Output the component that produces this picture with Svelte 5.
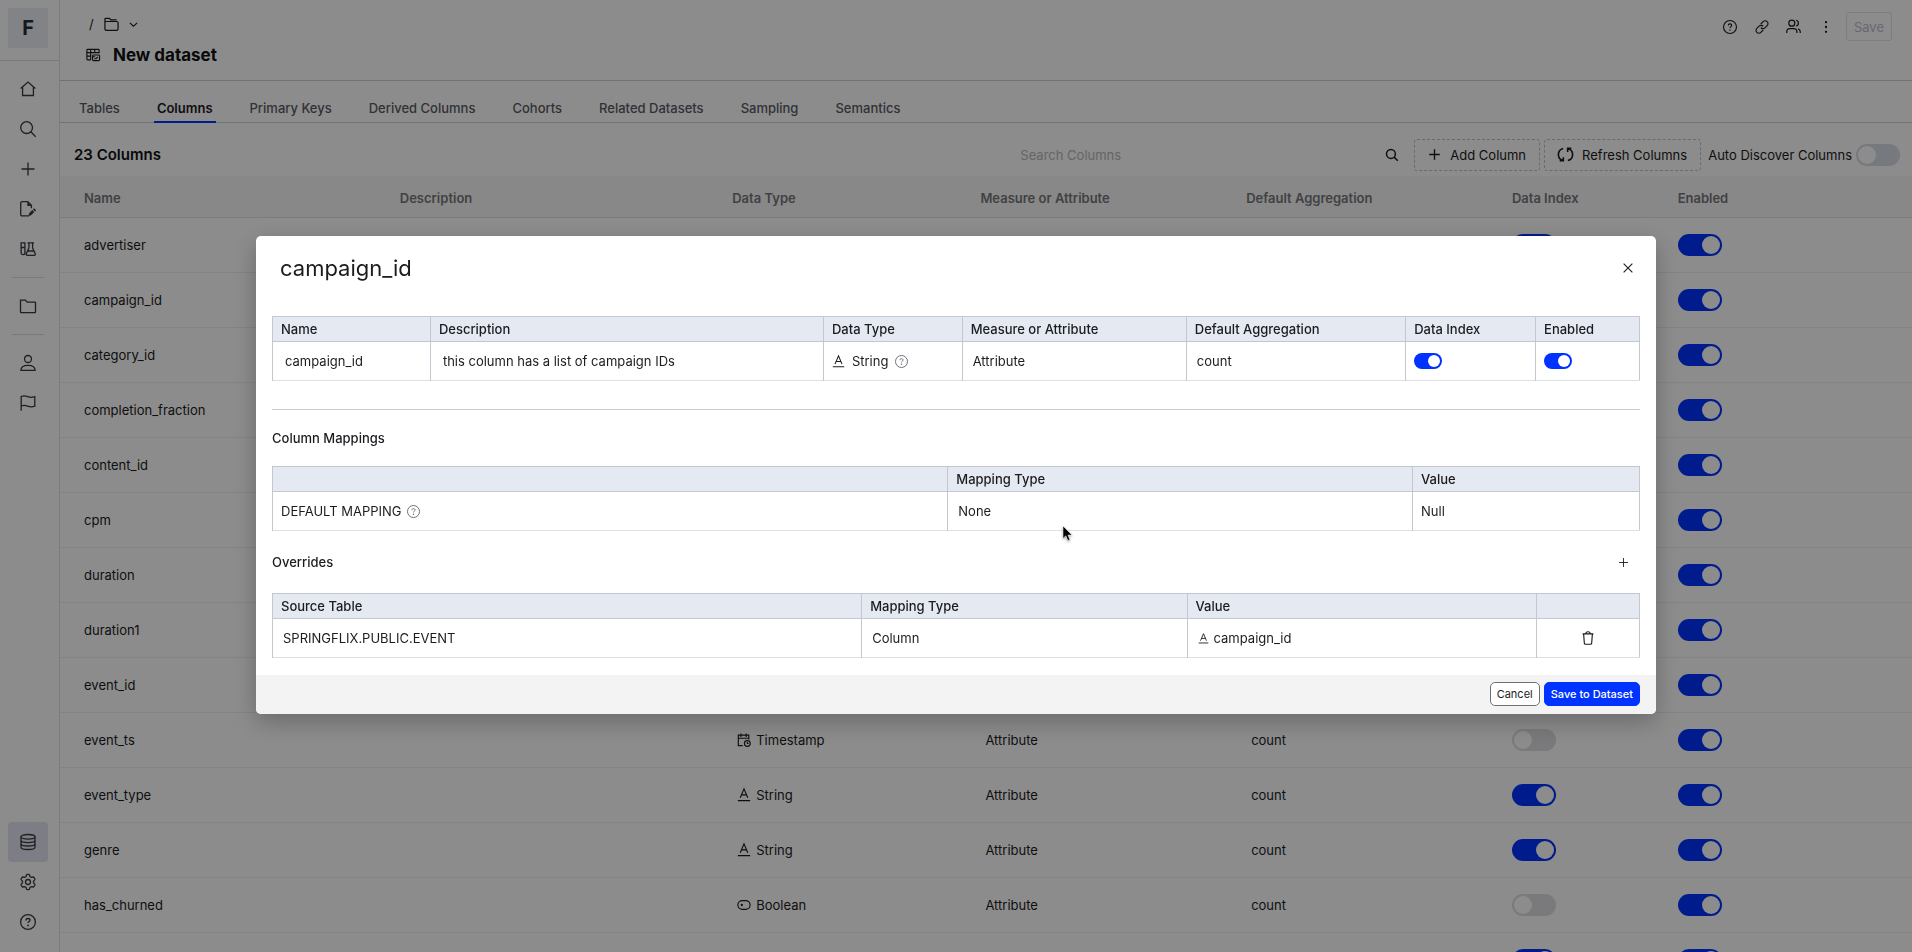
<script>
  const tabs = ['Tables', 'Columns', 'Primary Keys', 'Derived Columns', 'Cohorts', 'Related Datasets', 'Sampling', 'Semantics'];
  const headings = ['Name', 'Description', 'Data Type', 'Measure or Attribute', 'Default Aggregation', 'Data Index', 'Enabled'];

  let rows = $state([
    { name: 'advertiser', type: 'String', index: true, enabled: true },
    { name: 'campaign_id', type: 'String', index: true, enabled: true },
    { name: 'category_id', type: 'String', index: true, enabled: true },
    { name: 'completion_fraction', type: 'String', index: false, enabled: true },
    { name: 'content_id', type: 'String', index: true, enabled: true },
    { name: 'cpm', type: 'String', index: false, enabled: true },
    { name: 'duration', type: 'String', index: false, enabled: true },
    { name: 'duration1', type: 'String', index: false, enabled: true },
    { name: 'event_id', type: 'String', index: true, enabled: true },
    { name: 'event_ts', type: 'Timestamp', index: false, enabled: true },
    { name: 'event_type', type: 'String', index: true, enabled: true },
    { name: 'genre', type: 'String', index: true, enabled: true },
    { name: 'has_churned', type: 'Boolean', index: false, enabled: true },
    { name: 'language', type: 'String', index: true, enabled: true }
  ]);
  let autoDiscover = $state(false);
  let detailIndex = $state(true);
  let detailEnabled = $state(true);
</script>

{#snippet icon(name, size)}
  <svg class="icon" width={size} height={size} viewBox="0 0 16 16" aria-hidden="true">
    {#if name === 'home'}
      <path d="M.6 7.400 8 1l7.400 6.400M2.600 5.900v8.600h10.800V5.900" />
    {:else if name === 'search'}
      <circle cx="6.600" cy="6.600" r="5.900" /><path d="m10.800 10.800 4.900 4.900" />
    {:else if name === 'plus'}
      <path d="M8 1.500v13M1.500 8h13" />
    {:else if name === 'edit'}
      <path d="M9 14.800H2a1.300 1.300 0 0 1-1.300-1.300V2A1.300 1.300 0 0 1 2 .7h5.800l3.600 3.600v2.900" />
      <path class="fill" d="M7.300.9v4.200h4.200zM8.500 14.900l.6-2.600 3.200-3.200 2 2-3.200 3.200zM13 8.400l1.100-1.100 2 2L15 10.400z" />
    {:else if name === 'lab'}
      <path d="M.5 1.800h5M1.100 1.800v10a1.900 1.900 0 0 0 3.800 0v-10M1.100 6.500h3.800M7.500 1.800h6.500M8.900 1.800v5l-2.600 5.900c-.3.900.1 1.600.9 1.600h7.100c.8 0 1.300-.7.900-1.600l-2.600-5.900v-5M7.600 10h6.300" />
    {:else if name === 'folder'}
      <path d="M.5 14V2.200h5l1.700 2h7.700a.6.600 0 0 1 .6.600V14a.6.600 0 0 1-.6.600H1.100a.6.600 0 0 1-.6-.6z" />
    {:else if name === 'folders'}
      <path d="M1 12.800V2.200c0-.5.300-.8.800-.8h3.700c.5 0 .8.300 1 .7l.5 1h6.400M1 12.800c0 .9.600 1.500 1.500 1.500h11c.9 0 1.500-.6 1.500-1.500V6.300c0-.9-.6-1.500-1.500-1.500H1" />
    {:else if name === 'user'}
      <circle cx="8" cy="4" r="3.500" /><path d="M.9 15.300c0-3.200 2.900-5 7.100-5s7.100 1.800 7.100 5z" />
    {:else if name === 'flag'}
      <path d="M1.200 15.800V1.500c2.300-1 4.400-.7 6.500.2s4.400 1 7.100 0v9.500c-2.700 1-5 .9-7.100 0s-4.200-1.200-6.500-.2" />
    {:else if name === 'database'}
      <ellipse cx="8" cy="2.800" rx="7" ry="2.300" /><path d="M1 2.800v10.400c0 1.300 3.100 2.300 7 2.300s7-1 7-2.300V2.800M1 6.300c0 1.300 3.100 2.300 7 2.300s7-1 7-2.300M1 9.700C1 11 4.100 12 8 12s7-1 7-2.300" />
    {:else if name === 'gear'}
      <circle cx="8" cy="8" r="2.500" />
      <path d="M6.500 1a.9.900 0 0 1 .8-.6h1.400a.9.900 0 0 1 .8.600L10 2.600l1.300.8 1.700-.4a.9.900 0 0 1 .9.400l.9 1.500a.9.900 0 0 1-.1 1L13.500 7.200v1.600l1.200 1.300a.9.900 0 0 1 .1 1l-.9 1.500a.9.900 0 0 1-.9.400l-1.700-.4-1.300.8-.5 1.600a.9.900 0 0 1-.8.600H7.300a.9.900 0 0 1-.8-.6L6 13.400l-1.300-.8L3 13a.9.900 0 0 1-.9-.4l-.9-1.500a.9.900 0 0 1 .1-1l1.200-1.300V7.200L1.300 5.900a.9.900 0 0 1-.1-1l.9-1.500A.9.900 0 0 1 3 3l1.700.4L6 2.600z" />
    {:else if name === 'help'}
      <circle cx="8" cy="8" r="7.400" />
      <path d="M6 6.400c0-1.200.9-1.900 2-1.900s2 .7 2 1.700c0 1.300-2 1.500-2 2.900" /><circle class="fill" cx="8" cy="11.400" r=".9" />
    {:else if name === 'link'}
      <path d="m6.600 4.600 2.700-2.700a3.100 3.100 0 0 1 4.600 0 3.100 3.100 0 0 1 0 4.500L11.300 9a3.100 3.100 0 0 1-4.600-.3M9.400 11.400l-2.700 2.700a3.100 3.100 0 0 1-4.600 0 3.100 3.100 0 0 1 0-4.500L4.700 7a3.100 3.100 0 0 1 4.600.3" />
    {:else if name === 'users'}
      <circle cx="6.200" cy="4.400" r="3.200" /><path d="M.8 15v-1.500c0-2 1.600-3.200 3.400-3.200h4c1.800 0 3.400 1.200 3.400 3.200V15M10.800 1.300a3.200 3.200 0 0 1 0 6.200M12.800 10.600c1.500.4 2.400 1.500 2.400 3V15" />
    {:else if name === 'dots'}
      <circle class="fill" cx="8" cy="2.500" r="1.300" /><circle class="fill" cx="8" cy="8" r="1.300" /><circle class="fill" cx="8" cy="13.500" r="1.300" />
    {:else if name === 'chevron'}
      <path stroke-width="2" d="m1.500 5 6.500 6 6.500-6" />
    {:else if name === 'dataset'}
      <path d="M5.500 13.500H1.800a.8.800 0 0 1-.8-.8V2.300a.8.800 0 0 1 .8-.8h12.400a.8.800 0 0 1 .8.800V6M1 5.300h14M1 9.300h5M5.300 1.500v12M10 1.500V6" />
      <rect x="7.500" y="8" width="8" height="6.500" rx="1" /><path d="M9.500 12.300h2l2-2M7.500 10h3" />
    {:else if name === 'refresh'}
      <path d="M5.500 14.500A6.700 6.700 0 0 1 5.500 1.500M10.500 1.500A6.700 6.700 0 0 1 10.500 14.500M1.800 14.700h3.900v-3.900M14.200 1.300h-3.900v3.900" />
    {:else if name === 'String'}
      <path d="M3.700 11.200 8 1l4.300 10.200M5.200 7.900h5.600M1 14.500h14" />
    {:else if name === 'Timestamp'}
      <path d="M6.500 14.500H1.500v-12h12v5M1.500 6h12M4.500.5v4M10.500.5v4" /><circle cx="11.800" cy="12" r="3.300" /><path d="M11.800 10.300V12h1.400" />
    {:else if name === 'Boolean'}
      <rect x="1" y="3" width="14" height="10" rx="5" /><circle class="fill" cx="5.500" cy="8" r="1.300" />
    {:else if name === 'close'}
      <path d="m3 3 10 10M13 3 3 13" />
    {:else if name === 'trash'}
      <path d="M1.800 3.300h12.400M5.500 3.100C5.500 1.600 6.500.8 8 .8s2.500.8 2.500 2.300M3 3.300l.8 10.500c.1.900.6 1.400 1.400 1.400h5.600c.8 0 1.300-.5 1.400-1.400L13 3.300" />
    {/if}
  </svg>
{/snippet}

{#snippet nav(name, label, active = false)}
  <button class="nav-item" class:active aria-label={label}>{@render icon(name, 16)}</button>
{/snippet}

<div class="app">
  <nav class="sidebar">
    <div class="brand"><a href="#home" class="logo">F</a></div>
    <div class="nav-list">
      {@render nav('home', 'Home')}
      {@render nav('search', 'Search')}
      {@render nav('plus', 'New')}
      {@render nav('edit', 'Drafts')}
      {@render nav('lab', 'Experiments')}
      <hr />
      {@render nav('folder', 'Folders')}
      <hr />
      {@render nav('user', 'Profile')}
      {@render nav('flag', 'Flags')}
      <div class="spacer"></div>
      {@render nav('database', 'Data', true)}
      {@render nav('gear', 'Settings')}
      {@render nav('help', 'Help')}
    </div>
  </nav>

  <main>
    <header class="page-header">
      <div>
        <div class="crumbs">
          <span>/</span>
          {@render icon('folders', 15)}
          {@render icon('chevron', 9)}
        </div>
        <div class="title">
          {@render icon('dataset', 14)}
          <h1>New dataset</h1>
        </div>
      </div>
      <div class="actions">
        <button class="ghost" aria-label="Help">{@render icon('help', 14)}</button>
        <button class="ghost" aria-label="Copy link">{@render icon('link', 14)}</button>
        <button class="ghost" aria-label="Share">{@render icon('users', 15)}</button>
        <button class="ghost" aria-label="More">{@render icon('dots', 14)}</button>
        <button class="save" disabled>Save</button>
      </div>
    </header>

    <div class="tabs" role="tablist">
      {#each tabs as tab}
        <button role="tab" aria-selected={tab === 'Columns'} class:current={tab === 'Columns'}>{tab}</button>
      {/each}
    </div>

    <div class="toolbar">
      <h2>23 Columns</h2>
      <label class="search">
        <input type="text" placeholder="Search Columns" aria-label="Search Columns" />
        {@render icon('search', 12)}
      </label>
      <button class="dashed">{@render icon('plus', 13)}Add Column</button>
      <button class="dashed">{@render icon('refresh', 15)}Refresh Columns</button>
      <label class="auto">
        Auto Discover Columns
        <input class="toggle" type="checkbox" bind:checked={autoDiscover} />
      </label>
    </div>

    <table class="columns">
      <thead>
        <tr>
          {#each headings as heading}<th>{heading}</th>{/each}
        </tr>
      </thead>
      <tbody>
        {#each rows as row}
          <tr>
            <td>{row.name}</td>
            <td></td>
            <td class="value"><span class="type">{@render icon(row.type, 14)}{row.type}</span></td>
            <td class="value">Attribute</td>
            <td class="value">count</td>
            <td><input class="toggle" type="checkbox" aria-label="Data index for {row.name}" bind:checked={row.index} /></td>
            <td><input class="toggle" type="checkbox" aria-label="Enable {row.name}" bind:checked={row.enabled} /></td>
          </tr>
        {/each}
      </tbody>
    </table>
  </main>
</div>

<div class="backdrop">
  <div class="modal" role="dialog" aria-modal="true" aria-labelledby="modal-title">
    <div class="modal-header">
      <h2 id="modal-title">campaign_id</h2>
      <button class="ghost" aria-label="Close">{@render icon('close', 14)}</button>
    </div>

    <div class="modal-body">
      <table class="grid detail">
        <thead>
          <tr>
            {#each headings as heading}<th>{heading}</th>{/each}
          </tr>
        </thead>
        <tbody>
          <tr>
            <td class="editable">campaign_id</td>
            <td class="editable">this column has a list of campaign IDs</td>
            <td><span class="type wide">{@render icon('String', 13)}String<span class="hint">{@render icon('help', 13)}</span></span></td>
            <td class="pick">Attribute</td>
            <td class="pick">count</td>
            <td><input class="toggle small" type="checkbox" aria-label="Data Index" bind:checked={detailIndex} /></td>
            <td><input class="toggle small" type="checkbox" aria-label="Enabled" bind:checked={detailEnabled} /></td>
          </tr>
        </tbody>
      </table>

      <hr />

      <h3>Column Mappings</h3>
      <table class="grid mappings">
        <thead>
          <tr><th></th><th>Mapping Type</th><th>Value</th></tr>
        </thead>
        <tbody>
          <tr>
            <td><span class="type">DEFAULT MAPPING<span class="hint">{@render icon('help', 13)}</span></span></td>
            <td class="pick">None</td>
            <td>Null</td>
          </tr>
        </tbody>
      </table>

      <div class="section">
        <h3>Overrides</h3>
        <button class="ghost" aria-label="Add override">{@render icon('plus', 11)}</button>
      </div>
      <table class="grid overrides">
        <thead>
          <tr><th>Source Table</th><th>Mapping Type</th><th>Value</th><th></th></tr>
        </thead>
        <tbody>
          <tr>
            <td class="pick">SPRINGFLIX.PUBLIC.EVENT</td>
            <td class="pick">Column</td>
            <td class="pick"><span class="type">{@render icon('String', 11)}campaign_id</span></td>
            <td><button class="ghost" aria-label="Delete override">{@render icon('trash', 14)}</button></td>
          </tr>
        </tbody>
      </table>
    </div>

    <div class="modal-footer">
      <button class="btn">Cancel</button>
      <button class="btn primary">Save to Dataset</button>
    </div>
  </div>
</div>

<svg class="cursor" width="11" height="18" viewBox="0 0 12 20" aria-hidden="true">
  <path d="M1 1v14l3.200-3 2.200 5.300 2.300-1-2.200-5.100H11z" fill="#000" stroke="#fff" stroke-width=".6" />
</svg>

<style>
  :global(body) {
    overflow: hidden;
    font: 13px/20px Inter, sans-serif;
    color: #1b1c20;
  }
  :global(body) button,
  :global(body) input {
    font: inherit;
    color: inherit;
  }
  .app {
    display: flex;
    height: 100vh;
    overflow: hidden;
    background: #fff;
  }
  h1, h2, h3 {
    margin: 0;
  }
  button {
    display: inline-flex;
    align-items: center;
    justify-content: center;
    padding: 0;
    border: 0;
    background: none;
    white-space: nowrap;
  }
  .icon {
    display: block;
    flex: none;
    overflow: visible;
    fill: none;
    stroke: currentColor;
    stroke-width: 1.3;
  }
  .icon .fill {
    fill: currentColor;
    stroke: none;
  }

  .sidebar {
    display: flex;
    flex-direction: column;
    flex: none;
    width: 59px;
    border-right: 1px solid #e0e0e0;
    color: #3a3b42;
  }
  .brand {
    padding: 8px 8px 12px;
    border-bottom: 1px solid #e0e0e0;
  }
  .logo {
    display: grid;
    place-items: center;
    width: 40px;
    height: 40px;
    background: #eceef6;
    color: #2b2c33;
    font-size: 20px;
    font-weight: 700;
    text-decoration: none;
  }
  .nav-list {
    display: flex;
    flex-direction: column;
    flex: 1;
    padding: 8px 8px 10px;
  }
  .nav-item {
    width: 40px;
    height: 40px;
    border-radius: 4px;
  }
  .nav-item.active {
    background: #e3e6f2;
  }
  .nav-list hr {
    width: 32px;
    height: 1px;
    margin: 8px 4px;
    border: 0;
    background: #dcdcdc;
  }
  .spacer {
    flex: 1;
  }

  main {
    flex: 1;
    min-width: 0;
  }
  .page-header {
    display: flex;
    align-items: flex-start;
    justify-content: space-between;
    padding: 12px 20px 10px 26px;
    border-bottom: 1px solid #cfcfcf;
  }
  .crumbs {
    display: flex;
    align-items: center;
    gap: 10px;
    height: 24px;
    padding-left: 3px;
  }
  .title {
    display: flex;
    align-items: center;
    gap: 13px;
    height: 30px;
    padding-top: 4px;
  }
  .title h1 {
    color: #101114;
    font-size: 17px;
    font-weight: 700;
  }
  .actions {
    display: flex;
    align-items: center;
    gap: 8px;
  }
  .ghost {
    width: 24px;
    height: 24px;
  }
  :global(body) .save {
    height: 29px;
    padding: 0 7px;
    border: 1px solid #e4e4ec;
    border-radius: 3px;
    color: #c0c0cc;
  }
  .tabs {
    display: flex;
    gap: 31px;
    padding: 0 16px;
    border-bottom: 1px solid #cfcfcf;
  }
  :global(body) .tabs button {
    height: 42px;
    margin-bottom: -1px;
    padding: 14px 3px 0;
    border-bottom: 2px solid transparent;
    color: #5a5a64;
    font-weight: 500;
  }
  :global(body) .tabs button.current {
    border-color: #0033ff;
    color: #1b1c24;
    font-weight: 600;
  }
  .toolbar {
    display: flex;
    align-items: center;
    gap: 4px;
    height: 53px;
    padding: 10px 12px 0 14px;
    box-sizing: border-box;
  }
  .toolbar h2 {
    flex: 1;
    color: #101114;
    font-size: 15px;
    font-weight: 600;
  }
  .search {
    display: flex;
    align-items: center;
    width: 390px;
    padding-right: 12px;
    box-sizing: border-box;
  }
  .search input {
    flex: 1;
    min-width: 0;
    padding: 0;
    border: 0;
    outline: 0;
    background: none;
  }
  .search input::placeholder {
    color: #b8b8b8;
    opacity: 1;
  }
  .search .icon {
    stroke-width: 2;
  }
  .dashed {
    gap: 9px;
    height: 32px;
    padding: 0 13px;
    border: 1px dashed #c4c4c4;
    border-radius: 3px;
  }
  .dashed .icon {
    stroke-width: 1.7;
  }
  .auto {
    display: flex;
    align-items: center;
    gap: 4px;
    padding-left: 3px;
    white-space: nowrap;
  }

  .toggle {
    display: block;
    flex: none;
    width: 44px;
    height: 22px;
    margin: 0;
    padding: 2px;
    border-radius: 11px;
    box-sizing: border-box;
    appearance: none;
    background: #d7dde4;
  }
  .toggle::before {
    content: '';
    display: block;
    width: 18px;
    height: 18px;
    border-radius: 9px;
    background: #fff;
  }
  .toggle:checked {
    background: #0033ff;
  }
  .toggle:checked::before {
    margin-left: auto;
  }
  .toggle.small {
    width: 28px;
    height: 16px;
  }
  .toggle.small::before {
    width: 12px;
    height: 12px;
  }

  table {
    width: 100%;
    border-collapse: collapse;
    table-layout: fixed;
  }
  th,
  td {
    box-sizing: border-box;
  }
  th {
    text-align: left;
    font-weight: 500;
  }
  .columns {
    border-spacing: 0;
    border-collapse: separate;
  }
  .columns th {
    height: 42px;
    padding: 2px 12px 0;
    border-bottom: 1px solid #e2e2e2;
    background: #f8f8f8;
    color: #77777c;
    font-weight: 600;
  }
  .columns td {
    height: 55px;
    padding: 0 12px;
    border-bottom: 1px solid #f0f0f0;
  }
  .columns th:first-child,
  .columns td:first-child {
    width: 17.7%;
    padding-left: 24px;
  }
  .columns th:nth-child(2) { width: 17.95%; }
  .columns th:nth-child(3) { width: 13.4%; }
  .columns th:nth-child(4) { width: 14.35%; }
  .columns th:nth-child(5) { width: 14.35%; }
  .columns th:nth-child(6) { width: 8.95%; }
  .columns td.value {
    padding-left: 17px;
  }
  .columns tbody .toggle:not(:checked) {
    background: #dedee2;
  }
  .type {
    display: flex;
    align-items: center;
    gap: 5px;
  }
  .type.wide {
    gap: 7px;
  }
  .hint {
    color: #6d6e76;
  }
  .hint .icon {
    stroke-width: 1.2;
  }

  .backdrop {
    position: fixed;
    inset: 0;
    display: grid;
    place-items: center;
    padding-bottom: 2px;
    background: rgba(0, 0, 0, 0.45);
  }
  .modal {
    width: calc(100% - 64px);
    max-width: 1400px;
    border-radius: 5px;
    overflow: hidden;
    background: #fff;
    box-shadow: 0 8px 24px rgba(0, 0, 0, 0.25);
  }
  .modal-header {
    display: flex;
    align-items: center;
    justify-content: space-between;
    padding: 16px 16px 32px 24px;
  }
  .modal-header h2 {
    font-size: 22px;
    line-height: 32px;
    font-weight: 400;
  }
  .modal-body {
    padding: 0 16px 17px;
  }
  .modal-body hr {
    height: 1px;
    margin: 28px 0 18px;
    border: 0;
    background: #c6cad3;
  }
  .modal-body h3 {
    font-size: 13px;
    line-height: 20px;
    font-weight: 500;
  }
  .grid {
    border: 1px solid #c3c7d0;
    border-bottom-color: #dcdfe4;
  }
  .grid th {
    height: 25px;
    padding: 0 8px;
    border: 1px solid #c3c7d0;
    background: #e5e9f1;
  }
  .grid td {
    height: 39px;
    padding: 0 8px;
    border-left: 1px solid #c3c7d0;
  }
  .grid td.editable {
    padding-left: 12px;
  }
  .grid td.pick {
    padding-left: 10px;
  }
  .detail th:nth-child(1) { width: 11.55%; }
  .detail th:nth-child(2) { width: 28.75%; }
  .detail th:nth-child(3) { width: 10.15%; }
  .detail th:nth-child(4) { width: 16.4%; }
  .detail th:nth-child(5) { width: 16.05%; }
  .detail th:nth-child(6) { width: 9.5%; }
  .mappings {
    margin: 18px 0 20px;
  }
  .mappings th:nth-child(1) { width: 49.4%; }
  .mappings th:nth-child(2) { width: 34%; }
  .overrides th:nth-child(1) { width: 43.1%; }
  .overrides th:nth-child(2) { width: 23.8%; }
  .overrides th:nth-child(3) { width: 25.6%; }
  .overrides .ghost {
    display: flex;
    margin: 0 auto;
  }
  .section {
    display: flex;
    align-items: center;
    justify-content: space-between;
    padding: 0 5px 20px 0;
    height: 22px;
  }
  .modal-footer {
    display: flex;
    justify-content: flex-end;
    gap: 4px;
    padding: 7px 16px 8px;
    background: #f3f3f3;
  }
  :global(body) .btn {
    height: 24px;
    padding: 0 6px;
    border: 1px solid #6d7078;
    border-radius: 5px;
    background: #fff;
    font-size: 11px;
  }
  :global(body) .btn.primary {
    border-color: #0033ff;
    background: #0033ff;
    color: #fff;
    font-weight: 500;
  }
  .cursor {
    position: fixed;
    left: 1062px;
    top: 525px;
    filter: drop-shadow(0 1px 1px rgba(0, 0, 0, 0.4));
  }
</style>
